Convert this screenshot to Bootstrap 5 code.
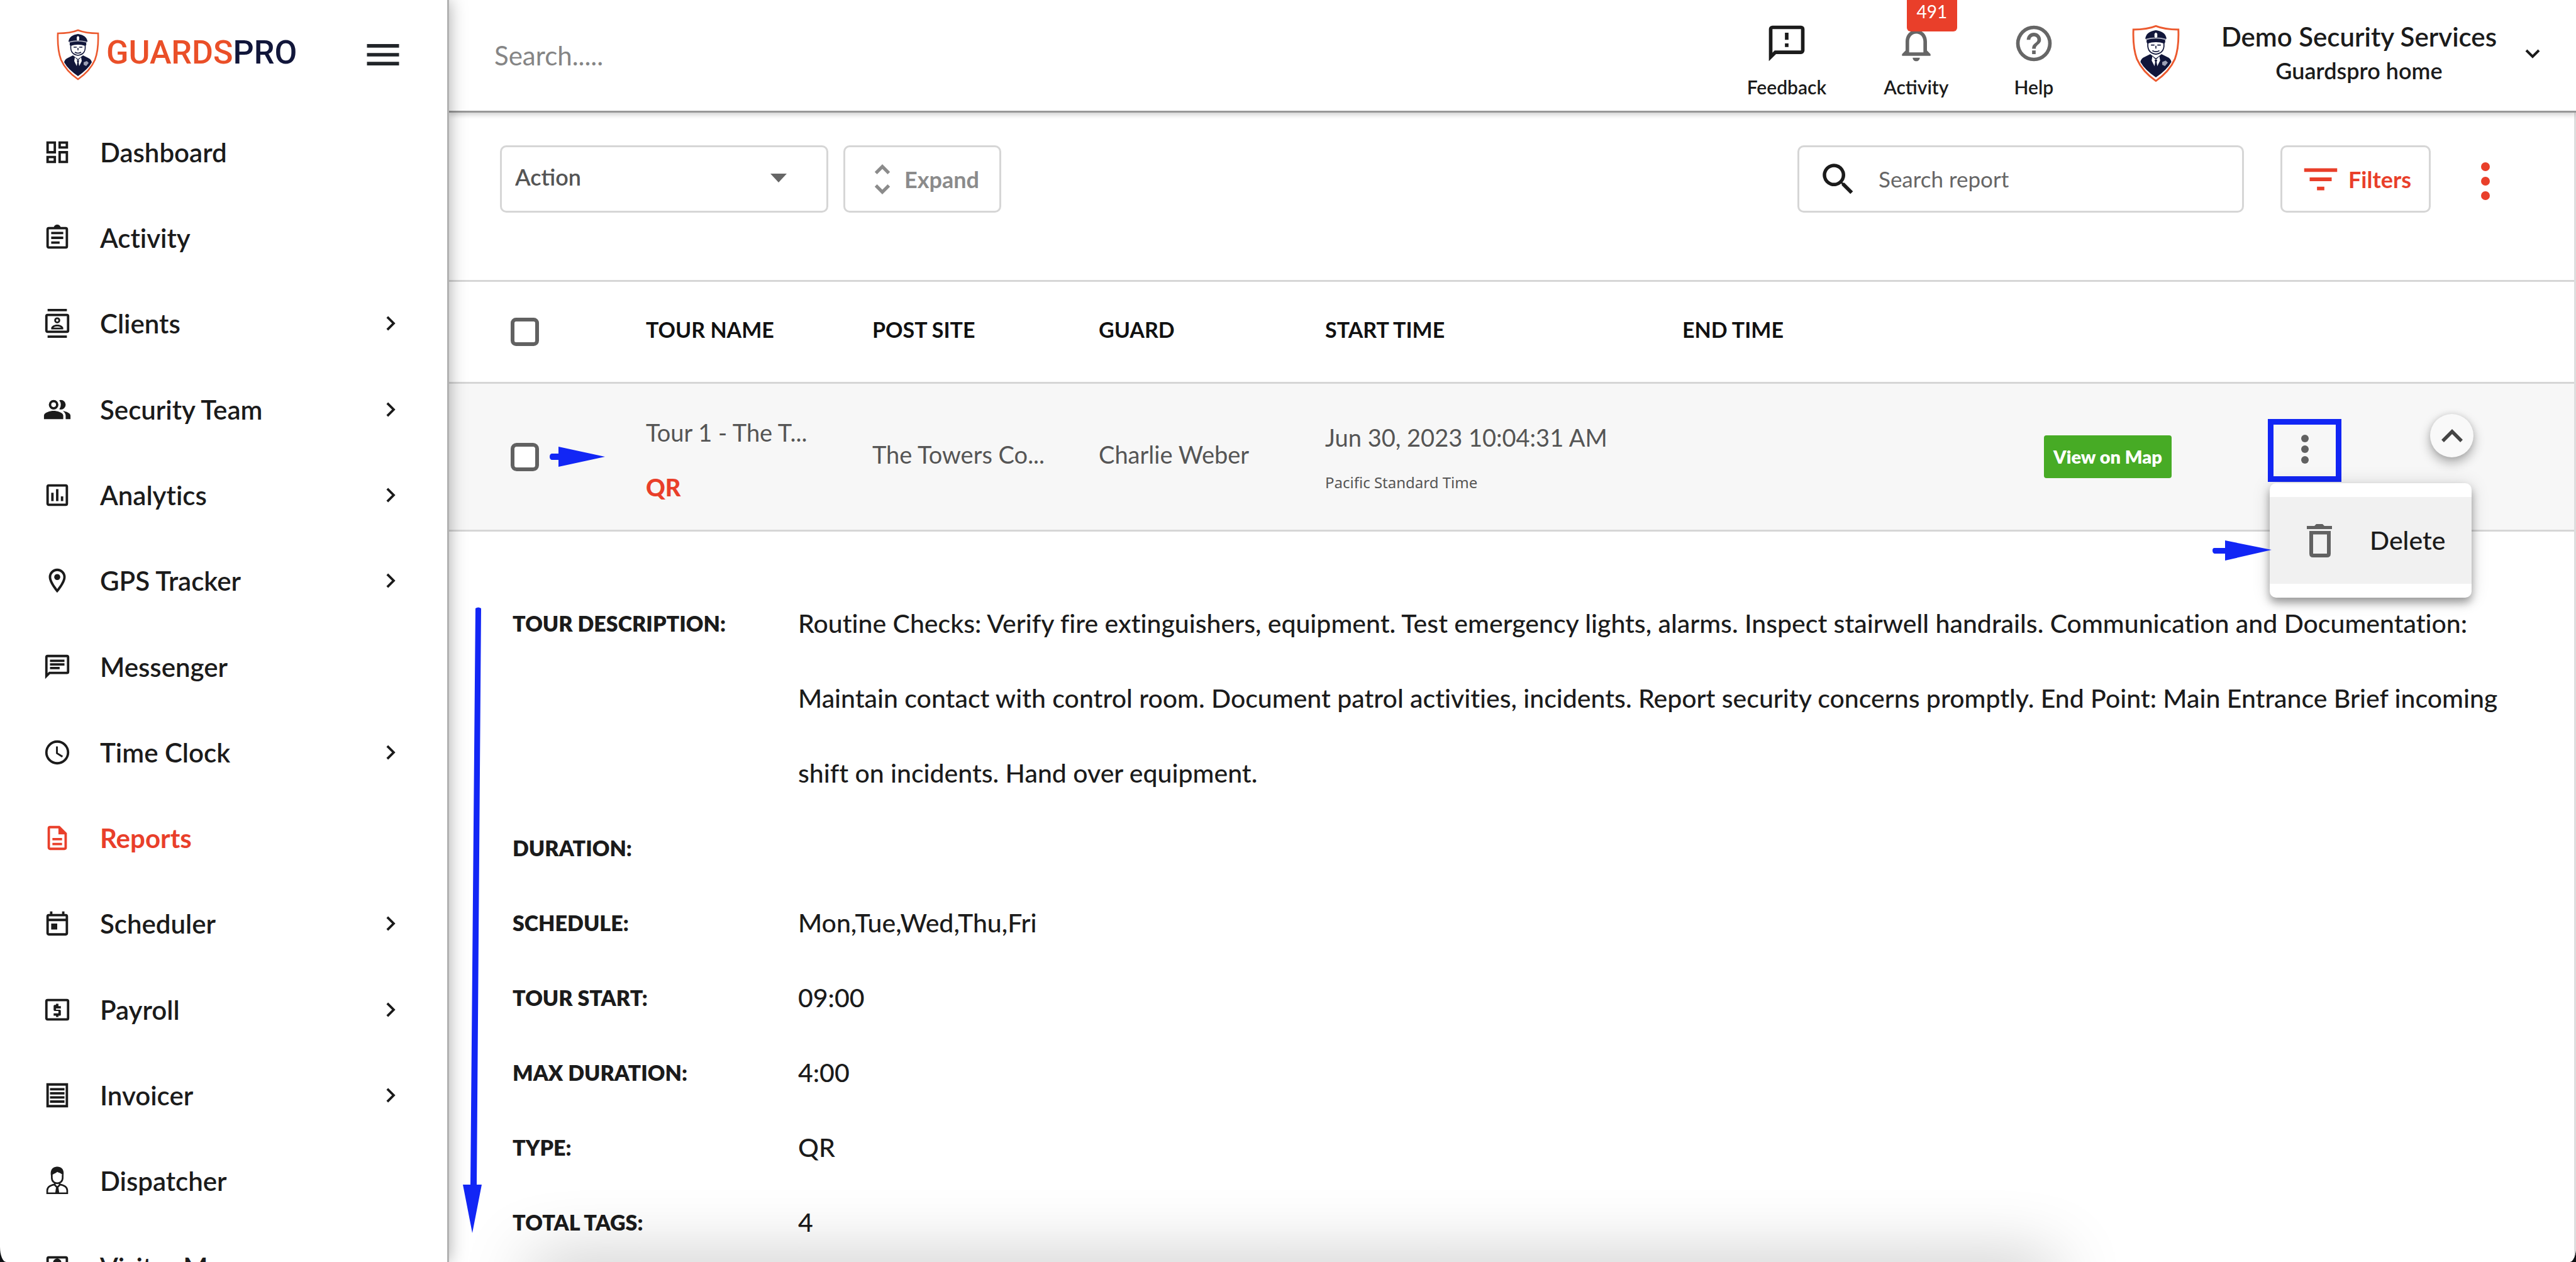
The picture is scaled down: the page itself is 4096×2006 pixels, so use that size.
<!DOCTYPE html>
<html lang="en">
<head>
<meta charset="utf-8">
<meta name="viewport" content="width=device-width, initial-scale=1">
<title>GuardsPro – Reports</title>
<link href="https://cdn.jsdelivr.net/npm/bootstrap@5.3.0/dist/css/bootstrap.min.css" rel="stylesheet">
<style>
:root{--ink:#1b1b1b;--soft:#555;--brand:#e93f2a;--line:#d6d6d6;--note:#1226f5}
html{background:#0d0f12}
body{background:transparent;font-family:Lato,sans-serif;font-size:42px;color:var(--ink);font-variant-ligatures:none}
svg{fill:currentColor;flex:none;display:block}
.shell{background:#fff;border-radius:0 0 10px 10px/0 0 24px 24px}
.ico-nav{width:46px;height:46px}
.ico-lg{width:68px;height:68px}

/* Sidebar */
.side{width:714px;border-right:3px solid #b2b2b2;box-shadow:0 0 26px rgba(0,0,0,.34);z-index:5}
.side-head{height:174px;padding:0 68px 0 90px}
.brand{gap:11px}
.brand-name{font-family:Roboto,sans-serif;font-weight:500;font-size:52px;line-height:60px;color:#ea4f28;padding-bottom:6px}
.brand-name span{color:#11163a}
.side-link{padding:0 67px 0 68px;gap:45px;font-weight:600;color:var(--ink);line-height:54px;padding-bottom:1px}
.side-link.active{color:var(--brand);font-weight:700}
.side-peek{height:60px}
.side-peek .side-link{height:136px}

/* Header */
.topbar{height:179px;border-bottom:3px solid #989898;box-shadow:0 3px 8px rgba(0,0,0,.2);padding:0 56px 0 72px;z-index:2}
.top-search{font-size:42px;color:var(--soft)}
.top-search::placeholder{color:#858585;opacity:1}
.top-btn{width:206px;padding-top:35px;gap:17px;font-size:30px;line-height:36px;font-weight:600;color:var(--ink)}
.top-btn-sm{width:168px}
.top-btn svg{color:#666}
.top-btn .ink{color:var(--ink)}
.count{top:0;left:88px;width:80px;height:51px;line-height:38px;font-size:28px;background:var(--brand);color:#fff;border-radius:0 0 6px 6px;font-weight:400}
.account{height:170px;margin-left:72px;color:var(--ink)}
.account-text{margin:0 44px 0 66px;font-size:42px;line-height:54px;font-weight:600}
.account-home{font-size:36px}

/* Toolbar */
.tools{padding:52px 111px 107px 81px}
.box{height:107px;border:3px solid var(--line);border-radius:10px;background:#fff}
.action-wrap{width:522px}
.action-wrap select{appearance:none;padding:0 21px 8px;font-size:36px;font-weight:600;color:var(--soft);outline:0}
.action-caret{right:66px;top:45px}
.btn-expand{width:251px;margin-left:24px;padding-left:27px;gap:3px;font-size:36px;font-weight:700;color:#8b8b8b}
.find{width:710px;padding-left:29px;gap:31px}
.find input{font-size:35px;color:#666}
.find input::placeholder{color:#666;opacity:1}
.btn-filter{width:239px;margin-left:58px;padding-left:26px;gap:9px;font-size:36px;font-weight:700;color:var(--brand)}
.btn-dots{width:60px;margin-left:57px;color:var(--brand)}
.tools .btn-dots{padding:6px 0 0}

/* Report list */
.report-list{table-layout:fixed;width:100%;border-collapse:separate;border-spacing:0}
.col-pick{width:313px}
.col-name{width:360px}
.col-start{width:568px}
.col-map{width:356px}
.col-menu{width:234px}
.col-fold{width:253px}
.report-list th{height:165px;border-top:3px solid var(--line);font-size:34px;font-weight:700;color:#111;padding:0 0 8px;vertical-align:middle}
.report-list th,.report-list td{border-bottom:3px solid var(--line)}
.report-list td{height:235px;background:#f7f7f7;font-size:38px;color:var(--soft);padding:0 0 8px;vertical-align:middle}
.report-list .pick{padding:0 0 0 98px}
.report-list .two{padding:10px 0 0}
.tick{width:45px;height:45px;border:6px solid #616161;border-radius:5px;background:#fff;margin:0}
.pick .d-flex{gap:17px}
.title-line{line-height:87px}
.when{line-height:72px}
.zone{font-family:"Noto Sans",sans-serif;font-size:24px}
.kind{color:var(--brand);font-weight:900}
.btn-map{width:203px;height:68px;border-radius:4px;background:#47ab25;color:#fff;font-size:29px;font-weight:800;line-height:34px}
.report-list .menu-cell{padding:0 0 20px}
.kebab{width:117px;height:100px;border:9px solid var(--note);border-radius:0;color:#616161}
.row-menu{top:102px;left:3px;width:321px;min-width:0;padding:22px 0;border:0;border-radius:10px;box-shadow:0 8px 14px rgba(0,0,0,.35),0 2px 30px rgba(0,0,0,.14)}
.row-menu .dropdown-item{height:138px;padding:0 0 0 55px;gap:56px;font-size:41px;font-weight:500;background:#f1f1f1;color:var(--ink)}
.row-menu .dropdown-item svg{color:#616161}
.report-list .fold-cell{padding:48px 0 0 24px;vertical-align:top}
.fold{width:69px;height:69px;background:#f9f9f9;box-shadow:0 8px 18px rgba(0,0,0,.32),0 0 8px rgba(0,0,0,.1);color:#444}
.note{color:var(--note)}
.menu-note{top:91px;right:318px}

/* Tour details */
.facts{padding:86px 90px 0 101px;line-height:119px}
.facts dl{display:grid;grid-template-columns:454px 1fr}
.facts dt{font-size:34px;font-weight:800}
.facts dd{font-size:41px;font-weight:500;margin:0;min-height:119px}
.long-note{top:119px;left:20px}
.dock-shade{left:130px;right:830px;bottom:-60px;height:60px;box-shadow:0 0 110px rgba(0,0,0,.29);pointer-events:none}
.content{border-right:3px solid #dedede}
</style>
<script src="https://cdn.jsdelivr.net/npm/bootstrap@5.3.0/dist/js/bootstrap.bundle.min.js"></script>
</head>
<body>
<svg width="0" height="0" class="position-absolute" aria-hidden="true">
  <symbol id="next" viewBox="0 0 24 24"><path d="M8.6 16.6 13.2 12 8.6 7.4 10 6l6 6-6 6z"/></symbol>
  <symbol id="guard" viewBox="0 0 68 82">
    <path d="M2 7Q22 7 34 2q12 5 32 5 1 26-5 42-8 18-27 31Q15 67 7 49 1 33 2 7z" fill="#fff" stroke="#ec5a2f" stroke-width="2.6"/>
    <path d="M12 53q1-5 6-7l8-4 8 6 8-6 8 4q5 2 6 7-6 11-22 22Q18 64 12 53z" fill="#11163a"/>
    <path d="m29 45 5 5 5-5 1 6-6 12-6-12z" fill="#fff"/>
    <path d="m32 50h4l-1 3 2 12-3 5-3-5 2-12z" fill="#11163a"/>
    <path d="M43 53l5-2 3 3-4 5-4-2z" fill="#9ea1b5"/>
    <path d="M23 24q-3 16 11 18 14-2 11-18z" fill="#fff" stroke="#11163a" stroke-width="1.6"/>
    <path d="M27 29h5M36 29h5M34 30v4M29 37q5 3 10 0" stroke="#11163a" stroke-width="1.5" fill="none"/>
    <path d="M19 20q1-10 15-12 14 2 15 12l-2 2q1 3-1 5-12-4-24 0-2-2-1-5z" fill="#11163a"/>
    <path d="M20 21q14-4 28 0" stroke="#b8bac8" stroke-width="1.6" fill="none"/>
    <path d="M34 11l2 2v4l-2 2-2-2v-4z" fill="#fff"/>
  </symbol>
</svg>

<div class="shell d-flex vh-100 overflow-hidden">

  <aside class="side d-flex flex-column position-relative flex-shrink-0 h-100">
    <div class="side-head d-flex align-items-center justify-content-between flex-shrink-0">
      <a href="#" class="brand d-flex align-items-center text-decoration-none">
        <svg width="68" height="82"><use href="#guard"/></svg>
        <span class="brand-name">GUARDS<span>PRO</span></span>
      </a>
      <button type="button" class="btn p-0 border-0" aria-label="Toggle menu"><svg class="ico-lg" viewBox="0 0 24 24"><path d="M3 6h18v2H3zm0 5h18v2H3zm0 5h18v2H3z"/></svg></button>
    </div>
    <nav class="d-flex flex-column flex-grow-1" aria-label="Main">
      <a href="#" class="side-link d-flex align-items-center flex-fill text-decoration-none"><svg class="ico-nav" viewBox="0 0 24 24"><path d="M19 5v2h-4V5h4M9 5v6H5V5h4m10 8v6h-4v-6h4M9 17v2H5v-2h4M21 3h-8v6h8V3zM11 3H3v10h8V3zm10 8h-8v10h8V11zm-10 4H3v6h8v-6z"/></svg>Dashboard</a>
      <a href="#" class="side-link d-flex align-items-center flex-fill text-decoration-none"><svg class="ico-nav" viewBox="0 0 24 24"><path d="M7 15h7v2H7zm0-4h10v2H7zm0-4h10v2H7zm12-4h-4.18C14.4 1.84 13.3 1 12 1s-2.4.84-2.82 2H5a2 2 0 0 0-2 2v14c0 1.1.9 2 2 2h14a2 2 0 0 0 2-2V5a2 2 0 0 0-2-2zm0 16H5V5h14v14z"/></svg>Activity</a>
      <a href="#" class="side-link d-flex align-items-center flex-fill text-decoration-none"><svg class="ico-nav" viewBox="0 0 24 24"><path d="M20 4H4a2 2 0 0 0-2 2v12c0 1.100.9 2 2 2h16a2 2 0 0 0 2-2V6a2 2 0 0 0-2-2zm0 14H4V6h16v12zM4 0h16v2H4zm0 22h16v2H4zm8-10a2.500 2.500 0 1 0 0-5 2.500 2.500 0 0 0 0 5zm0-3.500a1 1 0 1 1 0 2 1 1 0 0 1 0-2zM17 16c0-2.100-3.300-3-5-3s-5 .9-5 3v1h10v-1zm-8.200-.5c.6-.5 2-1 3.200-1s2.600.5 3.200 1H8.800z"/></svg><span class="flex-grow-1">Clients</span><svg class="ico-nav"><use href="#next"/></svg></a>
      <a href="#" class="side-link d-flex align-items-center flex-fill text-decoration-none"><svg class="ico-nav" viewBox="0 0 24 24"><path d="M16.670 13.130C18.040 14.060 19 15.320 19 17v3h4v-3c0-2.180-3.570-3.470-6.330-3.870zM15 12a4 4 0 0 0 0-8c-.47 0-.91.1-1.330.24a6 6 0 0 1 0 7.520c.42.14.86.24 1.330.24zM9 12a4 4 0 1 0 0-8 4 4 0 0 0 0 8zm0-6a2 2 0 1 1 0 4 2 2 0 0 1 0-4zm0 7c-2.670 0-8 1.340-8 4v3h16v-3c0-2.660-5.330-4-8-4z"/></svg><span class="flex-grow-1">Security Team</span><svg class="ico-nav"><use href="#next"/></svg></a>
      <a href="#" class="side-link d-flex align-items-center flex-fill text-decoration-none"><svg class="ico-nav" viewBox="0 0 24 24"><path d="M19 3H5a2 2 0 0 0-2 2v14c0 1.100.9 2 2 2h14a2 2 0 0 0 2-2V5a2 2 0 0 0-2-2zm0 16H5V5h14v14zM7 10h2v7H7zm4-3h2v10h-2zm4 6h2v4h-2z"/></svg><span class="flex-grow-1">Analytics</span><svg class="ico-nav"><use href="#next"/></svg></a>
      <a href="#" class="side-link d-flex align-items-center flex-fill text-decoration-none"><svg class="ico-nav" viewBox="0 0 24 24"><path d="M12 2a7 7 0 0 0-7 7c0 5.250 7 13 7 13s7-7.750 7-13a7 7 0 0 0-7-7zM7 9a5 5 0 0 1 10 0c0 2.880-2.880 7.190-5 9.880C9.920 16.210 7 11.850 7 9z"/><circle cx="12" cy="9" r="2.500"/></svg><span class="flex-grow-1">GPS Tracker</span><svg class="ico-nav"><use href="#next"/></svg></a>
      <a href="#" class="side-link d-flex align-items-center flex-fill text-decoration-none"><svg class="ico-nav" viewBox="0 0 24 24"><path d="M20 2H4a2 2 0 0 0-2 2v18l4-4h14a2 2 0 0 0 2-2V4a2 2 0 0 0-2-2zm0 14H5.200L4 17.200V4h16v12zM6 12h8v2H6zm0-3h12v2H6zm0-3h12v2H6z"/></svg>Messenger</a>
      <a href="#" class="side-link d-flex align-items-center flex-fill text-decoration-none"><svg class="ico-nav" viewBox="0 0 24 24"><path d="M12 2a10 10 0 1 0 0 20 10 10 0 0 0 0-20zm0 18a8 8 0 1 1 0-16 8 8 0 0 1 0 16zm.5-13H11v6l4.900 3.200.9-1.300-4.300-2.700z"/></svg><span class="flex-grow-1">Time Clock</span><svg class="ico-nav"><use href="#next"/></svg></a>
      <a href="#" class="side-link active d-flex align-items-center flex-fill text-decoration-none" aria-current="page"><svg class="ico-nav" viewBox="0 0 24 24"><path d="M8 16h8v2H8zm0-4h8v2H8zm6-10H6a2 2 0 0 0-2 2v16c0 1.100.9 2 2 2h12a2 2 0 0 0 2-2V8l-6-6zm4 18H6V4h7v5h5v11z"/></svg>Reports</a>
      <a href="#" class="side-link d-flex align-items-center flex-fill text-decoration-none"><svg class="ico-nav" viewBox="0 0 24 24"><path d="M19 4h-1V2h-2v2H8V2H6v2H5a2 2 0 0 0-2 2v14c0 1.100.9 2 2 2h14a2 2 0 0 0 2-2V6a2 2 0 0 0-2-2zm0 16H5V10h14v10zm0-12H5V6h14v2zM7 12h5v5H7z"/></svg><span class="flex-grow-1">Scheduler</span><svg class="ico-nav"><use href="#next"/></svg></a>
      <a href="#" class="side-link d-flex align-items-center flex-fill text-decoration-none"><svg class="ico-nav" viewBox="0 0 24 24"><path d="M20 3H4a2 2 0 0 0-2 2v14c0 1.100.9 2 2 2h16a2 2 0 0 0 2-2V5a2 2 0 0 0-2-2zm0 16H4V5h16v14zm-9-1h2v-1h1c.6 0 1-.4 1-1v-3c0-.6-.4-1-1-1h-3v-1h4V9h-2V7h-2v1h-1c-.6 0-1 .4-1 1v3c0 .6.4 1 1 1h3v2H9v2h2v1z"/></svg><span class="flex-grow-1">Payroll</span><svg class="ico-nav"><use href="#next"/></svg></a>
      <a href="#" class="side-link d-flex align-items-center flex-fill text-decoration-none"><svg class="ico-nav" viewBox="0 0 24 24"><path d="M3 2v20h18V2H3zm16 18H5V4h14v16zM6 6h12v2H6zm0 3.400h12v2H6zm0 3.400h12v2H6zm0 3.400h12v2H6z"/></svg><span class="flex-grow-1">Invoicer</span><svg class="ico-nav"><use href="#next"/></svg></a>
      <a href="#" class="side-link d-flex align-items-center flex-fill text-decoration-none"><svg class="ico-nav" viewBox="0 0 24 24"><path d="M7.500 7v2.500c0 6 9 6 9 0V7M10 13.500v2l2 2 2-2v-2M10 15c-4 .6-6.300 2-6.300 5v2.300h16.600V20c0-3-2.300-4.400-6.300-5" fill="none" stroke="currentColor" stroke-width="1.400"/><path d="M7 8.500C5.500 2 9 .2 12 .2s6.500 1.800 5 8.300c-1-3-3-3-5-4C10.500 6 8 6 7 8.500zM11 17.500h2l.7 4.800h-3.400z"/></svg>Dispatcher</a>
    </nav>
    <div class="side-peek overflow-hidden flex-shrink-0">
      <a href="#" class="side-link d-flex align-items-center text-decoration-none"><svg class="ico-nav" viewBox="0 0 24 24"><path d="M19 3H5a2 2 0 0 0-2 2v14c0 1.100.9 2 2 2h14a2 2 0 0 0 2-2V5a2 2 0 0 0-2-2zm0 16H5V5h14v14zM12 12a3.500 3.500 0 1 0 0-7 3.500 3.500 0 0 0 0 7z"/></svg>Visitor Manager</a>
    </div>
  </aside>

  <div class="flex-grow-1 position-relative d-flex flex-column overflow-hidden">
    <header class="topbar d-flex flex-shrink-0 position-relative">
      <input type="search" class="top-search flex-grow-1 border-0 p-0 bg-transparent" placeholder="Search....." aria-label="Search">
      <button type="button" class="top-btn btn border-0 pb-0 px-0 d-flex flex-column align-items-center"><svg class="ico-lg ink" viewBox="0 0 24 24"><path d="M20 2H4a2 2 0 0 0-2 2v18l4-4h14a2 2 0 0 0 2-2V4a2 2 0 0 0-2-2zm0 14H5.200L4 17.200V4h16v12zM11 12h2v2h-2zm0-6h2v4h-2z"/></svg>Feedback</button>
      <button type="button" class="top-btn btn border-0 pb-0 px-0 d-flex flex-column align-items-center position-relative"><svg class="ico-lg" viewBox="0 0 24 24"><path d="M12 22a2 2 0 0 0 2-2h-4c0 1.100.9 2 2 2zm6-6v-5c0-3.070-1.630-5.640-4.500-6.320V4a1.500 1.500 0 0 0-3 0v.68C7.640 5.360 6 7.920 6 11v5l-2 2v1h16v-1l-2-2zm-2 1H8v-6c0-2.480 1.510-4.500 4-4.500s4 2.020 4 4.500v6z"/></svg>Activity<span class="count badge position-absolute p-0">491</span></button>
      <button type="button" class="top-btn top-btn-sm btn border-0 pb-0 px-0 d-flex flex-column align-items-center"><svg class="ico-lg" viewBox="0 0 24 24"><path d="M11 18h2v-2h-2v2zm1-16a10 10 0 1 0 0 20 10 10 0 0 0 0-20zm0 18a8 8 0 1 1 0-16 8 8 0 0 1 0 16zm0-14a4 4 0 0 0-4 4h2a2 2 0 1 1 4 0c0 2-3 1.750-3 5h2c0-2.250 3-2.500 3-5a4 4 0 0 0-4-4z"/></svg>Help</button>
      <button type="button" class="account btn border-0 p-0 d-flex align-items-center">
        <svg width="76" height="92" viewBox="0 0 68 82"><use href="#guard"/></svg>
        <span class="account-text d-flex flex-column align-items-center"><span>Demo Security Services</span><span class="account-home">Guardspro home</span></span>
        <svg width="26" height="16" viewBox="0 0 26 16"><path d="M3 3l10 10L23 3" fill="none" stroke="currentColor" stroke-width="4"/></svg>
      </button>
    </header>

    <main class="content flex-grow-1">
      <div class="tools d-flex">
        <div class="action-wrap position-relative">
          <select class="box w-100" aria-label="Action"><option>Action</option><option>Delete</option></select>
          <svg class="action-caret position-absolute pe-none" width="26" height="14" viewBox="0 0 26 14" color="#666"><path d="M0 0h26L13 14z"/></svg>
        </div>
        <button type="button" class="btn-expand box btn py-0 pe-0 d-flex align-items-center"><svg width="64" height="64" viewBox="0 0 24 24"><path d="M12 5.830 15.170 9l1.410-1.410L12 3 7.410 7.590 8.830 9 12 5.830zm0 12.340L8.830 15l-1.410 1.410L12 21l4.590-4.590L15.170 15 12 18.170z"/></svg>Expand</button>
        <label class="find box d-flex align-items-center ms-auto"><svg width="66" height="66" viewBox="0 0 24 24"><path d="M15.500 14h-.79l-.28-.27a6.500 6.500 0 1 0-.7.7l.27.28v.79l5 4.990L20.490 19l-4.990-5zm-6 0a4.500 4.500 0 1 1 0-9 4.500 4.500 0 0 1 0 9z"/></svg><input type="search" class="border-0 bg-transparent p-0 flex-grow-1" placeholder="Search report" aria-label="Search report"></label>
        <button type="button" class="btn-filter box btn py-0 pe-0 d-flex align-items-center"><svg width="70" height="70" viewBox="0 0 24 24"><path d="M10 18h4v-2h-4v2zM3 6v2h18V6H3zm3 7h12v-2H6v2z"/></svg>Filters</button>
        <button type="button" class="btn-dots btn border-0 d-flex align-items-center justify-content-center" aria-label="More options"><svg width="14" height="60" viewBox="0 0 14 60"><circle cx="7" cy="7" r="7"/><circle cx="7" cy="30" r="7"/><circle cx="7" cy="53" r="7"/></svg></button>
      </div>

      <table class="report-list">
        <colgroup><col class="col-pick"><col class="col-name"><col class="col-name"><col class="col-name"><col class="col-start"><col><col class="col-map"><col class="col-menu"><col class="col-fold"></colgroup>
        <thead><tr>
          <th class="pick" scope="col"><input type="checkbox" class="tick form-check-input d-block" aria-label="Select all tours"></th>
          <th scope="col">TOUR NAME</th><th scope="col">POST SITE</th><th scope="col">GUARD</th><th scope="col">START TIME</th><th scope="col">END TIME</th><th></th><th></th><th></th>
        </tr></thead>
        <tbody><tr>
          <td class="pick"><div class="d-flex align-items-center"><input type="checkbox" class="tick form-check-input" aria-label="Select Tour 1"><svg class="note" width="88" height="32" viewBox="0 0 88 32"><path d="M3 11h11V0l74 16-74 16V21H3q-3-1-3-5t3-5z"/></svg></div></td>
          <td class="two"><div class="title-line">Tour 1 - The T...</div><div class="title-line kind">QR</div></td>
          <td>The Towers Co...</td>
          <td>Charlie Weber</td>
          <td class="two"><div class="when">Jun 30, 2023 10:04:31 AM</div><div class="when zone">Pacific Standard Time</div></td>
          <td></td>
          <td class="pb-0"><button type="button" class="btn-map btn border-0 p-0 d-block">View on Map</button></td>
          <td class="menu-cell"><div class="dropdown">
            <button type="button" class="kebab btn p-0 d-flex align-items-center justify-content-center" aria-label="Tour menu" aria-expanded="true"><svg width="12" height="50" viewBox="0 0 12 50"><circle cx="6" cy="6" r="6"/><circle cx="6" cy="23" r="6"/><circle cx="6" cy="40" r="6"/></svg></button>
            <div class="row-menu dropdown-menu show">
              <button type="button" class="dropdown-item d-flex align-items-center"><svg width="48" height="54" viewBox="0 0 24 27"><path d="M2 2h6l1.500-1.500h5L16 2h6v2.500H2zM4 6h17v18q0 3-3 3H7q-3 0-3-3zm3 2.700V24h11V8.700z"/></svg>Delete</button>
              <svg class="note menu-note position-absolute" width="94" height="32" viewBox="0 0 94 32"><path d="M3 12h17V0l74 15-74 17V21H3q-3-1-3-5t3-4z"/></svg>
            </div>
          </div></td>
          <td class="fold-cell"><button type="button" class="fold btn border-0 rounded-circle p-0 d-flex align-items-center justify-content-center" aria-label="Collapse"><svg width="36" height="22" viewBox="0 0 36 22"><path d="M3 19 18 4l15 15" fill="none" stroke="currentColor" stroke-width="5.500"/></svg></button></td>
        </tr></tbody>
      </table>

      <section class="facts position-relative">
        <svg class="long-note note position-absolute" width="40" height="996" viewBox="0 0 40 996"><path d="M22 3q4-3 9 0l-7 916h8L17 996 2 919h12z"/></svg>
        <dl>
          <dt>TOUR DESCRIPTION:</dt><dd>Routine Checks: Verify fire extinguishers, equipment. Test emergency lights, alarms. Inspect stairwell handrails. Communication and Documentation: Maintain contact with control room. Document patrol activities, incidents. Report security concerns promptly. End Point: Main Entrance Brief incoming shift on incidents. Hand over equipment.</dd>
          <dt>DURATION:</dt><dd></dd>
          <dt>SCHEDULE:</dt><dd>Mon,Tue,Wed,Thu,Fri</dd>
          <dt>TOUR START:</dt><dd>09:00</dd>
          <dt>MAX DURATION:</dt><dd>4:00</dd>
          <dt>TYPE:</dt><dd>QR</dd>
          <dt>TOTAL TAGS:</dt><dd>4</dd>
        </dl>
      </section>
    </main>
    <div class="dock-shade position-absolute"></div>
  </div>
</div>
</body>
</html>
